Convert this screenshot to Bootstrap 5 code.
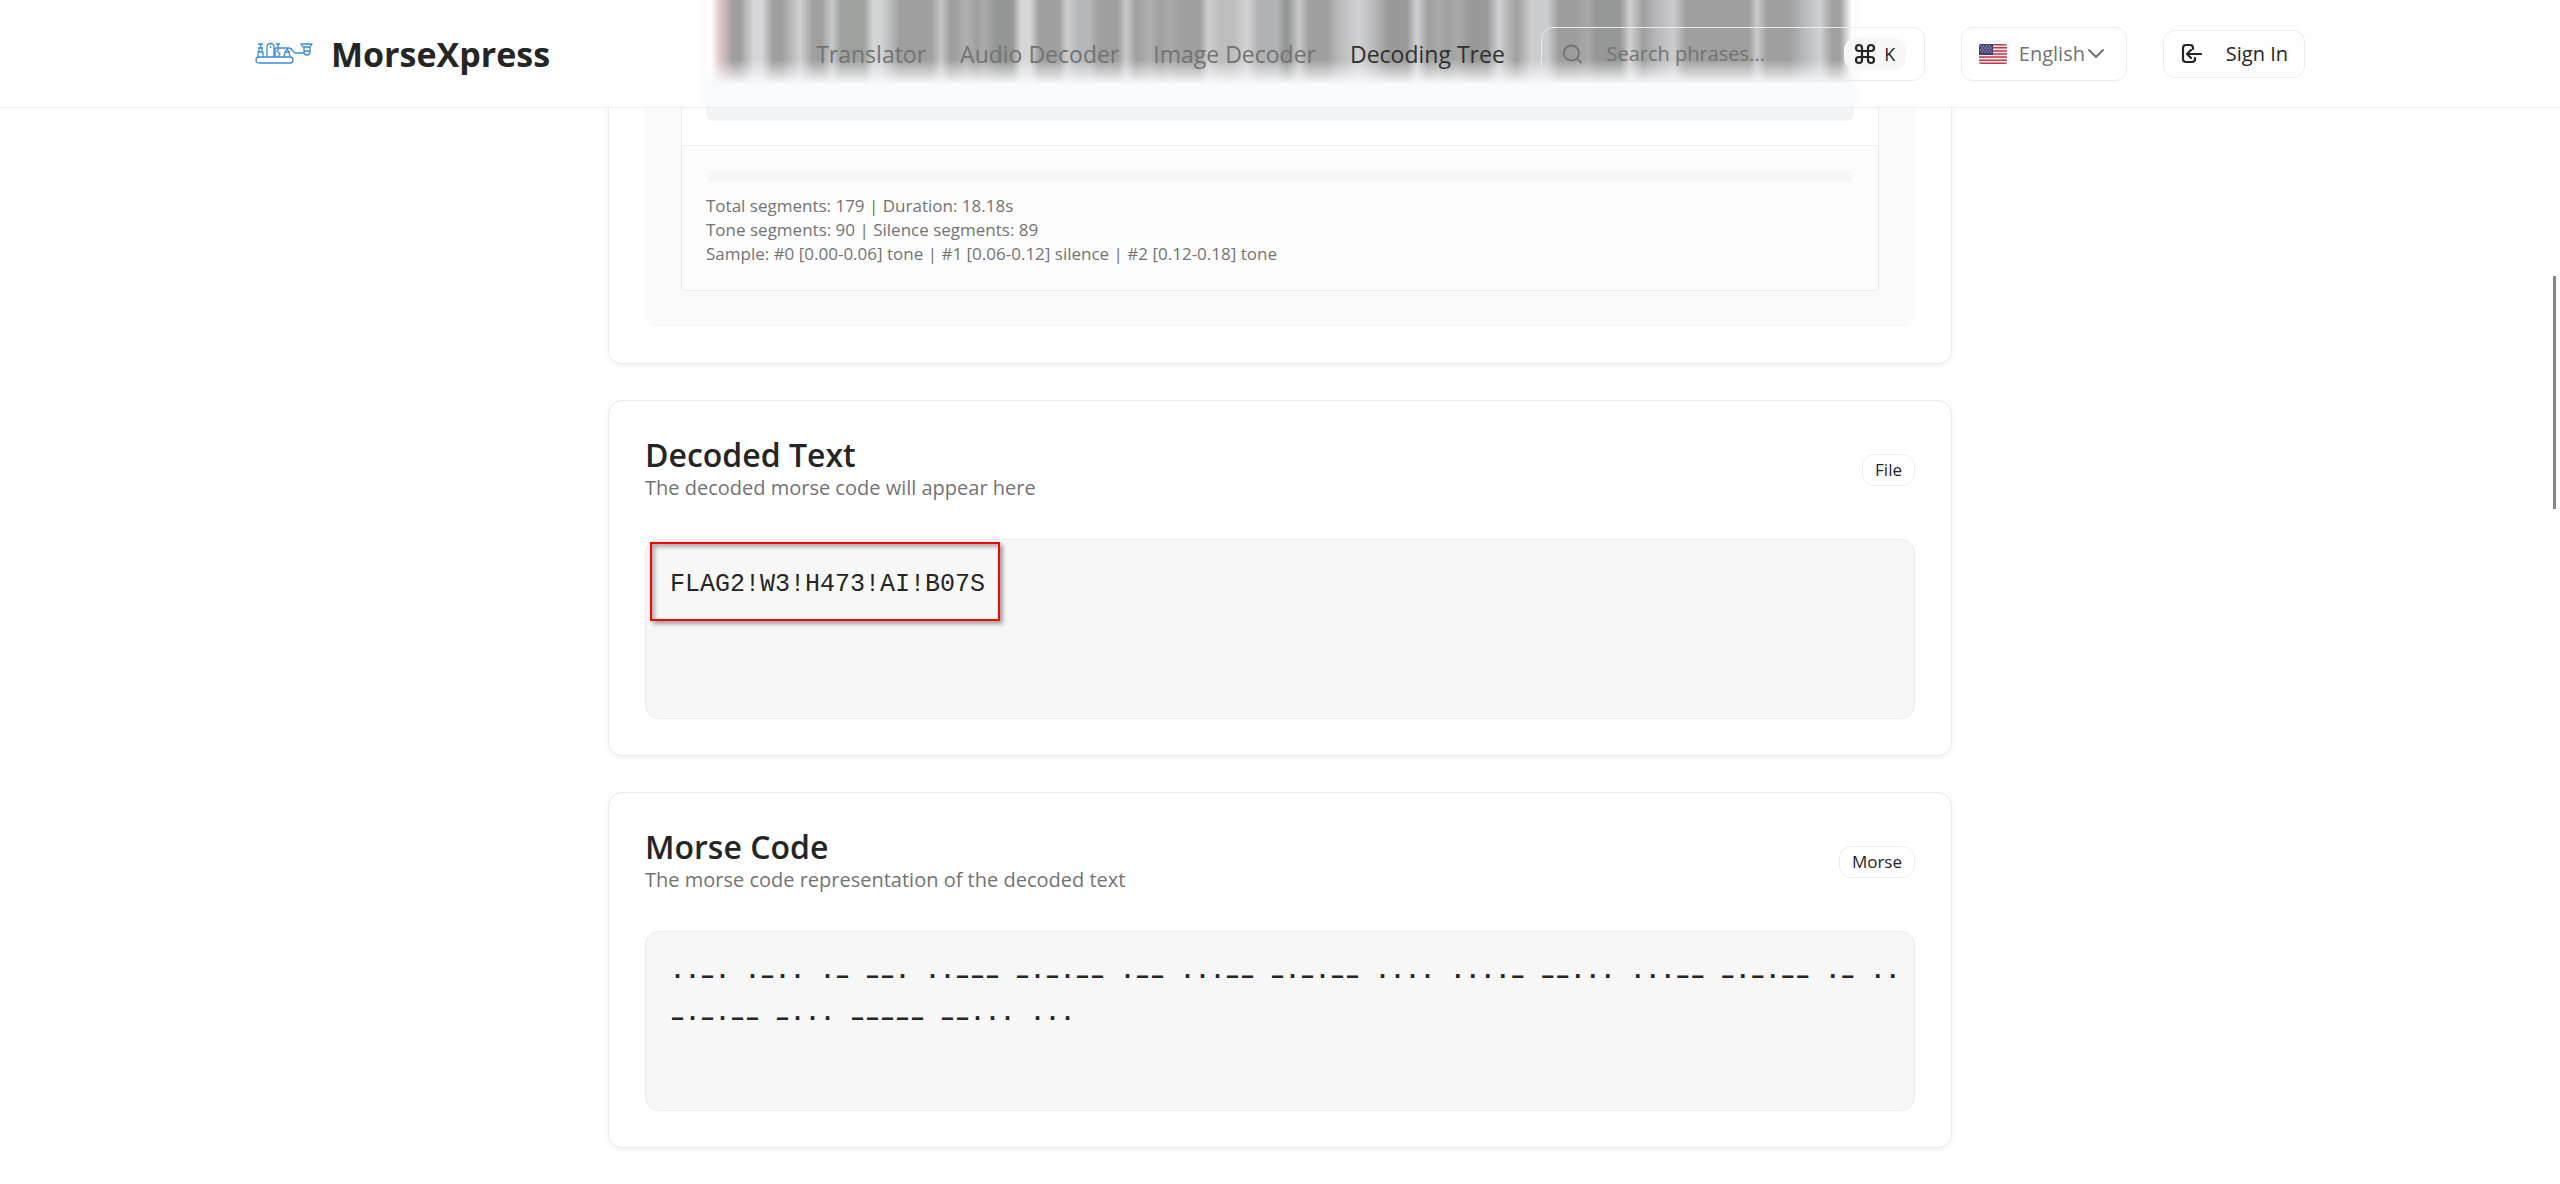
<!DOCTYPE html>
<html lang="en" data-bs-theme="light">
<head>
<meta charset="utf-8">
<meta name="viewport" content="width=device-width, initial-scale=1">
<title>MorseXpress</title>
<link href="https://cdn.jsdelivr.net/npm/bootstrap@5.3.0/dist/css/bootstrap.min.css" rel="stylesheet">
<style>
:root{--line:#ebebeb;--ink:#252525;--soft:#737373}
body{font-family:"Open Sans","Noto Sans",sans-serif;font-size:20px;line-height:30px;color:var(--ink);background:#fff;overflow-x:hidden}
/* header */
.site-header{height:108px;background:#fefefe;border-bottom:1px solid var(--line)}
.glass,.glass-bars{height:107px;max-width:1148px}
.glass{background:#f9fafc;box-shadow:0 0 8px 4px #fbfbfc;clip-path:inset(0 -20px)}
.glass-bars{-webkit-mask-image:linear-gradient(#000 60px,transparent 84px);mask-image:linear-gradient(#000 60px,transparent 84px);
background:linear-gradient(90deg,#fff 5px,#e3cccc 13px,#9e9e9e 27px,#9e9e9e 34px,#d6d7da 48px,#d6d7da 56px,#9f9f9f 67px,#9f9f9f 76px,#cfd0d2 94px,#9f9f9f 107px,#9f9f9f 116px,#c8c9cb 126px,#9fa19f 135px,#9fa19f 158px,#d2d4d6 167px,#d2d4d6 175px,#bbbcbd 184px,#9f9f9f 194px,#9f9f9f 225px,#c5c7c7 235px,#9f9f9f 244px,#9f9f9f 250px,#b0b2b0 260px,#9f9f9f 271px,#ababab 278px,#939694 291px,#939694 306px,#d6d6d8 315px,#d6d6d8 324px,#9f9f9f 333px,#9f9f9f 353px,#cdcdd0 361px,#b5b7b9 373px,#b5b7b9 383px,#9f9f9f 393px,#9f9f9f 412px,#c9cacc 420px,#9f9f9f 430px,#b0b0b0 444px,#9f9f9f 454px,#aaa 464px,#9f9f9f 473px,#9f9f9f 494px,#cfcfd2 502px,#bdbdbd 514px,#bdbdbd 527px,#d4d4d6 541px,#b0b2b3 552px,#b0b2b3 571px,#8f9290 581px,#c8cac9 593px,#9f9f9f 603px,#9f9f9f 621px,#b7b8ba 632px,#d2d2d5 653px,#b8b9bb 668px,#999 683px,#999 701px,#d0d1d4 711px,#9f9f9f 722px,#aaa 733px,#9ea19f 741px,#a8aaa8 752px,#999 763px,#999 781px,#cfd0d3 793px,#b5b5b5 802px,#9f9f9f 811px,#cccdcf 825px,#cccdcf 841px,#9d9d9d 853px,#9d9d9d 868px,#a8a8a8 882px,#959896 890px,#959896 914px,#d0d0d3 924px,#9f9f9f 937px,#b8b9bc 952px,#cbcbcd 968px,#9f9f9f 980px,#9f9f9f 1043px,#c9cacd 1051px,#9f9f9f 1061px,#9f9f9f 1083px,#b5b7ba 1097px,#d0d1d4 1114px,#a0a0a0 1126px,#a0a0a0 1134px,#fff 1146px)}
.site-bar{max-width:2098px;padding:0 24px;height:107px}
.bar-tools{gap:36px}
.brand-name{font-size:34px;line-height:48px;font-weight:700;color:var(--ink)}
.site-nav{gap:34px;font-size:23px}
.site-nav a{color:var(--soft);text-decoration:none}
.site-nav a.active{color:#303030}
.boxed{border:1px solid var(--line);border-radius:12px;background:transparent;color:var(--ink)}
.find{width:384px;height:54px;padding:0 18px 0 20px}
.find input{border:0;background:transparent;outline:0;min-width:0;color:var(--soft);padding:0}
.find input::placeholder{color:var(--soft);opacity:1}
.keys{background:#f7f7f7;border-radius:12px;height:32px;width:66px;font-size:18px;color:var(--ink)}
.lang{height:54px;padding:0 20px 0 17px;color:var(--soft)}
.lang svg:first-child{margin-right:12px}
.lang select{appearance:none;-webkit-appearance:none;border:0;background:transparent;color:inherit;outline:0;padding:0}
.sign{height:48px;padding:0 16px 0 17px;gap:24px}
/* cards */
.page-col{max-width:1392px;padding:0 24px 36px;gap:36px}
.panel{border:1px solid var(--line);border-radius:14px;background:#fff;box-shadow:0 2px 5px rgba(0,0,0,.06);padding:36px}
.panel.scrolled{border-top:0;border-radius:0 0 14px 14px;padding-top:0}
.panel-head{margin-bottom:36px}
.well-soft{background:#fafafa;border-radius:0 0 12px 12px;padding:0 36px 36px}
.scope{border:1px solid var(--line);border-top:0;border-radius:0 0 4px 4px;background:#fff}
.scope-top{padding:0 24px 24px}
.scope-strip{height:121px;background:#f2f3f5;border-radius:0 0 6px 6px}
.scope-foot{background:#fdfdfd;border-top:1px solid var(--line);border-radius:0 0 4px 4px;padding:24px;font-size:17px;line-height:24px;color:var(--soft)}
.scope-track{height:12px;border-radius:6px;background:#f7f7f7;margin-bottom:12px}
.panel-title{font-size:32px;line-height:36px;font-weight:600;margin:0}
.panel-sub{color:var(--soft);margin:0}
.tag{border:1px solid var(--line);border-radius:12px;padding:2px 12px;font-size:17px;line-height:26px}
.readout{min-height:180px;background:#f7f7f7;border:1px solid var(--line);border-radius:14px;padding:24px 12px 24px 24px;font-family:"Liberation Mono",monospace;font-size:25px;line-height:42px;white-space:pre-wrap}
.readout.signal{font-weight:700}
.callout-box{left:4px;top:2px;width:350px;height:79px;border:2px solid #f00;box-shadow:3px 3px 4px rgba(0,0,0,.35),inset 3px 3px 4px rgba(0,0,0,.3)}
.thumb{right:4px;top:276px;width:3px;height:233px;background:#858585;z-index:1040}
</style>
</head>
<body>
<header class="site-header fixed-top">
  <div class="glass position-absolute top-0 start-0 end-0 mx-auto" aria-hidden="true"><div class="glass-bars"></div></div>
  <div class="site-bar position-relative mx-auto d-flex align-items-center">
    <a href="#" class="d-flex align-items-center text-decoration-none me-auto">
      <svg class="me-3" width="60" height="24" viewBox="0 0 60 24" fill="none" stroke="#3b8ae0" stroke-width="1.3" stroke-linejoin="round" aria-hidden="true"><rect x="1" y="15" width="37" height="6" rx="3"/><path d="M3 15v-5h5v5M4 10V6h3v4M3 2h5M5.500 2v4M3 6h5M12 15V5a3.500 3.500 0 0 1 7 0v10M15.500 4v2M21 2h4M23 2v4M20 6h14q2 0 4 3l2 2h9M24 6l-2 3 3 3-2 3M20 15V6M29 15l1-5h4l1 5M30 10l2-3 2 3M46 2h11l-2 3h-7zM49 5v5q0 3 3 3t3-3V5M49 9h6"/></svg>
      <span class="brand-name">MorseXpress</span>
    </a>
    <div class="bar-tools d-flex align-items-center">
      <nav class="site-nav d-flex" aria-label="Main">
        <a href="#">Translator</a><a href="#">Audio Decoder</a><a href="#">Image Decoder</a><a href="#" class="active">Decoding Tree</a>
      </nav>
      <label class="find boxed d-flex align-items-center">
        <svg width="22" height="22" viewBox="0 0 22 22" fill="none" stroke="#737373" stroke-width="2" stroke-linecap="round" aria-hidden="true"><circle cx="10" cy="10" r="8"/><path d="m16 16 4 4"/></svg>
        <input class="flex-fill ms-4" type="search" placeholder="Search phrases..." aria-label="Search phrases">
        <span class="keys d-flex align-items-center justify-content-center gap-2"><svg width="22" height="22" viewBox="1 1 22 22" fill="none" stroke="#252525" stroke-width="2.200" aria-hidden="true"><path d="M15 6v12a3 3 0 1 0 3-3H6a3 3 0 1 0 3 3V6a3 3 0 1 0-3 3h12a3 3 0 1 0-3-3"/></svg>K</span>
      </label>
      <label class="lang boxed d-flex align-items-center">
        <svg width="28" height="20" viewBox="0 0 28 20" aria-hidden="true"><clipPath id="fl"><rect width="28" height="20" rx="2"/></clipPath><g clip-path="url(#fl)"><path fill="#f3e9ea" d="M0 0h28v20H0z"/><path stroke="#bf3a4b" stroke-width="1.500" d="M0 .8h28M0 3.800h28M0 6.900h28M0 10h28M0 13.100h28M0 16.200h28M0 19.200h28"/><path fill="#3f3f75" d="M0 0h14v11H0z"/><path stroke="#d5d5e5" stroke-width="1.200" stroke-dasharray="1.200 1.800" d="M1 2h12M2.500 4h11M1 6h12M2.500 8h11"/></g></svg>
        <select aria-label="Language"><option>English</option></select>
        <svg width="20" height="14" viewBox="0 0 20 14" fill="none" stroke="#737373" stroke-width="2" stroke-linecap="round" stroke-linejoin="round" aria-hidden="true"><path d="m3 3 7 7 7-7"/></svg>
      </label>
      <button type="button" class="sign boxed d-flex align-items-center">
        <svg width="21" height="22" viewBox="0 0 21 22" fill="none" stroke="#252525" stroke-width="2.200" stroke-linecap="round" stroke-linejoin="round" aria-hidden="true"><path d="M12 6V5a3 3 0 0 0-3-3H5a3 3 0 0 0-3 3v11a3 3 0 0 0 3 3h6a3 3 0 0 0 3-3v-1M20 11H6M10 7l-4 4 4 4"/></svg>
        Sign In
      </button>
    </div>
  </div>
</header>

<main class="page-col mx-auto d-flex flex-column">
  <section class="panel scrolled" aria-label="Signal">
    <div class="well-soft">
      <div class="scope">
        <div class="scope-top"><div class="scope-strip"></div></div>
        <div class="scope-foot">
          <div class="scope-track"></div>
          <div>Total segments: 179 | Duration: 18.18s</div>
          <div>Tone segments: 90 | Silence segments: 89</div>
          <div>Sample: #0 [0.00-0.06] tone | #1 [0.06-0.12] silence | #2 [0.12-0.18] tone</div>
        </div>
      </div>
    </div>
  </section>
  <section class="panel">
    <div class="panel-head d-flex justify-content-between align-items-center">
      <div><h2 class="panel-title">Decoded Text</h2><p class="panel-sub">The decoded morse code will appear here</p></div>
      <span class="tag">File</span>
    </div>
    <div class="readout position-relative">FLAG2!W3!H473!AI!B07S<div class="callout-box position-absolute"></div></div>
  </section>
  <section class="panel">
    <div class="panel-head d-flex justify-content-between align-items-center">
      <div><h2 class="panel-title">Morse Code</h2><p class="panel-sub">The morse code representation of the decoded text</p></div>
      <span class="tag">Morse</span>
    </div>
    <div class="readout signal">··–· ·–·· ·– ––· ··––– –·–·–– ·–– ···–– –·–·–– ···· ····– ––··· ···–– –·–·–– ·– ·· –·–·–– –··· ––––– ––··· ···</div>
  </section>
</main>
<div class="thumb position-fixed" aria-hidden="true"></div>
<script src="https://cdn.jsdelivr.net/npm/bootstrap@5.3.0/dist/js/bootstrap.bundle.min.js"></script>
</body>
</html>
